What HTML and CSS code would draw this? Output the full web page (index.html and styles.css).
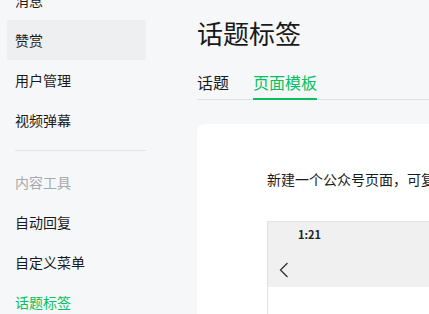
FILE: index.html
```
<!DOCTYPE html>
<html lang="zh-CN">
<head>
    <meta charset="UTF-8">
    <meta name="viewport" content="width=device-width, initial-scale=1.0">
    <title>话题标签</title>
    <link rel="stylesheet" href="styles.css">
</head>
<body>
    <div class="layout">
        <div class="sidebar">
            <div class="menu-item">消息</div>
            <div class="menu-item active">赞赏</div>
            <div class="menu-item">用户管理</div>
            <div class="menu-item">视频弹幕</div>
            <div class="menu-divider"></div>
            <div class="menu-title">内容工具</div>
            <div class="menu-item">自动回复</div>
            <div class="menu-item">自定义菜单</div>
            <div class="menu-item current">话题标签</div>
        </div>

        <div class="main">
            <h2 class="page-title">话题标签</h2>
            <div class="tabs">
                <div class="tab">话题</div>
                <div class="tab selected">页面模板</div>
            </div>
            <div class="card">
                <p class="card-desc">新建一个公众号页面，可复用于多篇文章中展示话题内容</p>
                <div class="phone">
                    <div class="phone-head">
                        <div class="phone-time">1:21</div>
                        <div class="phone-nav">
                            <svg width="10" height="16" viewBox="0 0 10 16">
                                <path d="M8.5 1 L1.5 8 L8.5 15" fill="none" stroke="#333" stroke-width="1.3"/>
                            </svg>
                        </div>
                    </div>
                </div>
            </div>
        </div>
    </div>
</body>
</html>
```

FILE: styles.css
```
html, body {
    margin: 0;
    padding: 0;
    height: 100%;
    overflow: hidden;
}
body {
    font-family: "Noto Sans CJK SC", "Noto Sans", sans-serif;
    background-color: #f6f7f9;
    color: #1a1a1a;
}
.layout {
    display: flex;
    height: 100%;
}
.sidebar {
    width: 139px;
    padding-left: 7px;
    margin-top: -20px;
    flex-shrink: 0;
}
.menu-item {
    height: 40px;
    line-height: 40px;
    padding-left: 8px;
    font-size: 14px;
}
.menu-item.active {
    background-color: #eeeff1;
}
.menu-item.current {
    color: #07c160;
}
.menu-divider {
    height: 1px;
    background-color: #e3e4e8;
    margin: 10px 0 0 8px;
}
.menu-title {
    height: 40px;
    line-height: 40px;
    padding-left: 8px;
    margin-top: 11px;
    font-size: 14px;
    color: #a8a9ad;
}
.main {
    flex: 1;
    padding-left: 51px;
    min-width: 0;
}
.page-title {
    margin: 15px 0 0;
    font-size: 26px;
    font-weight: normal;
    line-height: 36px;
}
.tabs {
    display: flex;
    gap: 24px;
    margin-top: 20px;
    border-bottom: 1px solid #dfe0e3;
}
.tab {
    font-size: 16px;
    line-height: 22px;
    padding-bottom: 5px;
    margin-bottom: -1px;
    border-bottom: 2px solid transparent;
}
.tab.selected {
    color: #07c160;
    border-bottom-color: #07c160;
}
.card {
    margin-top: 24px;
    background-color: #fff;
    border-radius: 8px 0 0 0;
    padding: 44px 0 0 70px;
    height: 400px;
    white-space: nowrap;
    overflow: hidden;
}
.card-desc {
    margin: 0;
    font-size: 14px;
    line-height: 22px;
}
.phone {
    margin-top: 31px;
    width: 375px;
    height: 300px;
    border: 1px solid #e2e2e2;
}
.phone-head {
    background-color: #f0f0f0;
    height: 65px;
}
.phone-time {
    padding: 5px 0 0 30px;
    font-size: 11px;
    font-weight: bold;
    line-height: 14px;
    color: #222;
}
.phone-nav {
    padding: 21px 0 0 11px;
    line-height: 0;
}
```
